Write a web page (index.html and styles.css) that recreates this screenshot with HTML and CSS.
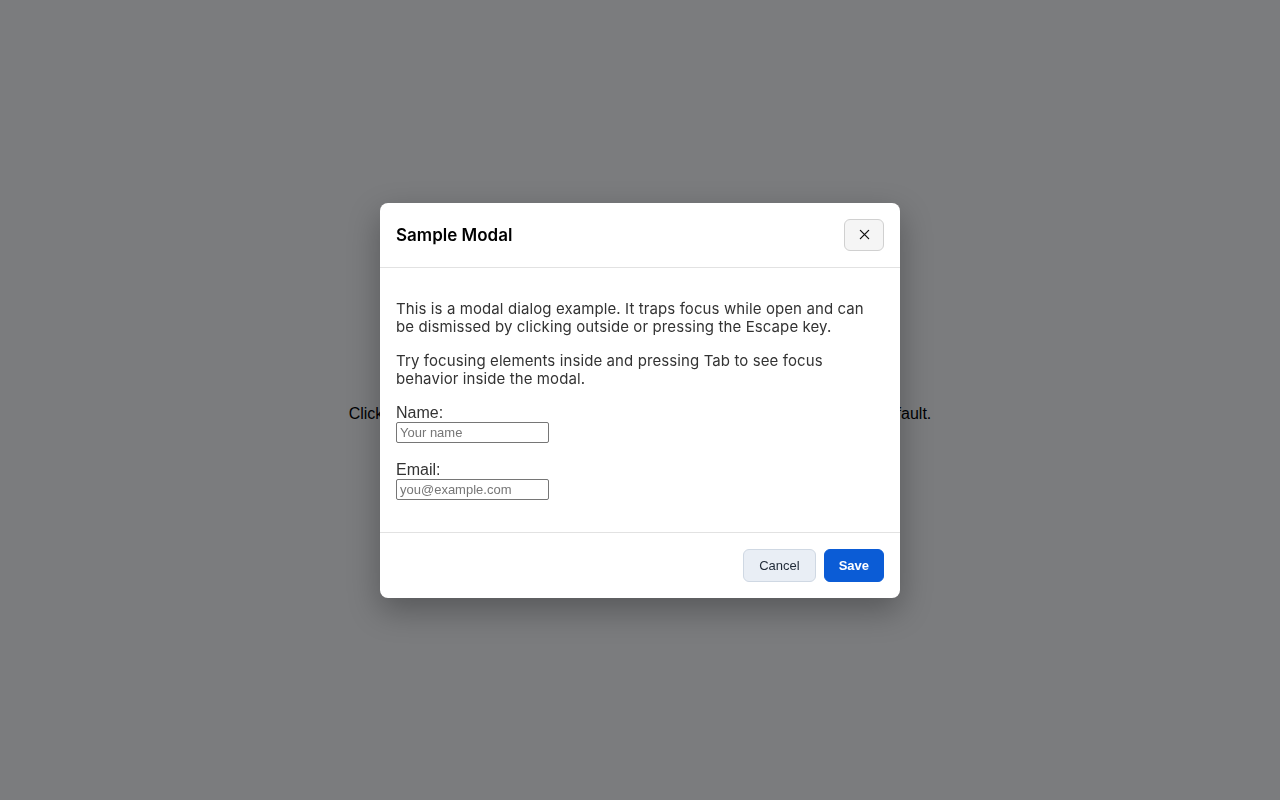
FILE: index.html
```html
<!DOCTYPE html>
<html lang="en">
<head>
<meta charset="utf-8">
<title>Modal Demo</title>
<link rel="stylesheet" href="styles.css">
</head>
<body>
<main class="page">
  <h1 class="page-title">Modal Demo</h1>
  <p class="page-text">Click the button below to open the modal dialog. It is closed and hidden by default.</p>
  <button class="open-btn" type="button">Open Modal</button>
</main>

<div class="overlay">
  <div class="modal" role="dialog" aria-modal="true" aria-labelledby="modal-title">
    <header class="modal-header">
      <h2 id="modal-title" class="modal-title">Sample Modal</h2>
      <button class="close-btn" type="button" aria-label="Close">
        <svg width="11" height="11" viewBox="0 0 12 12" aria-hidden="true">
          <path d="M1.5 1.5 L10.5 10.5 M10.5 1.5 L1.5 10.5" stroke="#111" stroke-width="1.4" stroke-linecap="round" fill="none"/>
        </svg>
      </button>
    </header>
    <div class="modal-body">
      <p class="modal-text">This is a modal dialog example. It traps focus while open and can be dismissed by clicking outside or pressing the Escape key.</p>
      <p class="modal-text">Try focusing elements inside and pressing Tab to see focus behavior inside the modal.</p>
      <div class="field">
        <label class="field-label" for="name">Name:</label>
        <input class="field-input" id="name" type="text" placeholder="Your name">
      </div>
      <div class="field">
        <label class="field-label" for="email">Email:</label>
        <input class="field-input" id="email" type="email" placeholder="you@example.com">
      </div>
    </div>
    <footer class="modal-footer">
      <button class="btn btn-secondary" type="button">Cancel</button>
      <button class="btn btn-primary" type="button">Save</button>
    </footer>
  </div>
</div>
</body>
</html>
```

FILE: styles.css
```css
* {
  box-sizing: border-box;
}

html, body {
  margin: 0;
  padding: 0;
  height: 100%;
}

body {
  background: #ffffff;
  font-family: "Liberation Sans", Arial, sans-serif;
  color: #000;
}

.page {
  min-height: 100vh;
  display: flex;
  flex-direction: column;
  align-items: center;
  justify-content: center;
  padding-top: 32px;
}

.page-title {
  margin: 0 0 12px;
  font-size: 28px;
}

.page-text {
  margin: 0 0 16px;
  font-size: 16px;
  line-height: 18px;
  white-space: nowrap;
}

.open-btn {
  font: inherit;
  font-size: 14px;
  padding: 6px 14px;
}

.overlay {
  position: fixed;
  inset: 0;
  background: rgba(1, 3, 7, 0.52);
  display: flex;
  align-items: center;
  justify-content: center;
}

.modal {
  width: 520px;
  background: #ffffff;
  border-radius: 8px;
  box-shadow: 0 12px 32px rgba(0, 0, 0, 0.3);
  font-family: Inter, "Noto Sans", sans-serif;
  color: #333333;
}

.modal-header {
  display: flex;
  align-items: center;
  justify-content: space-between;
  padding: 16px;
  border-bottom: 1px solid #e2e2e2;
}

.modal-title {
  margin: 0;
  font-size: 17px;
  font-weight: 600;
  color: #000;
  line-height: 32px;
}

.close-btn {
  width: 40px;
  height: 32px;
  display: flex;
  align-items: center;
  justify-content: center;
  padding: 0;
  background: #f5f5f5;
  border: 1px solid #d0d0d0;
  border-radius: 6px;
}

.modal-body {
  padding: 16px 16px 16px;
}

.modal-text {
  margin: 16px 0;
  font-size: 15px;
  line-height: 18px;
  letter-spacing: 0.1px;
}

.field {
  display: flex;
  flex-direction: column;
  align-items: flex-start;
  margin-bottom: 18px;
}

.field + .field {
  margin-top: 0;
  margin-bottom: 16px;
}

.field-label {
  font-family: "Liberation Sans", Arial, sans-serif;
  font-size: 16px;
  line-height: 18px;
  color: #333;
}

.field-input {
  width: 153px;
  height: 21px;
  padding: 1px 3px;
  border: 1px solid #767676;
  border-radius: 2px;
  font-family: "Liberation Sans", Arial, sans-serif;
  font-size: 13px;
  color: #000;
}

.field-input::placeholder {
  color: #767676;
}

.modal-footer {
  display: flex;
  justify-content: flex-end;
  gap: 8px;
  padding: 16px;
  border-top: 1px solid #e2e2e2;
}

.btn {
  height: 33px;
  padding: 0 15px;
  border-radius: 6px;
  font-family: "Liberation Sans", Arial, sans-serif;
  font-size: 13px;
}

.btn-secondary {
  background: #e9eef5;
  border: 1px solid #cfd8e3;
  color: #1f2937;
}

.btn-primary {
  background: #0b5cd6;
  border: 1px solid #0b5cd6;
  color: #ffffff;
  font-weight: 600;
  padding: 0 14px;
}
```
